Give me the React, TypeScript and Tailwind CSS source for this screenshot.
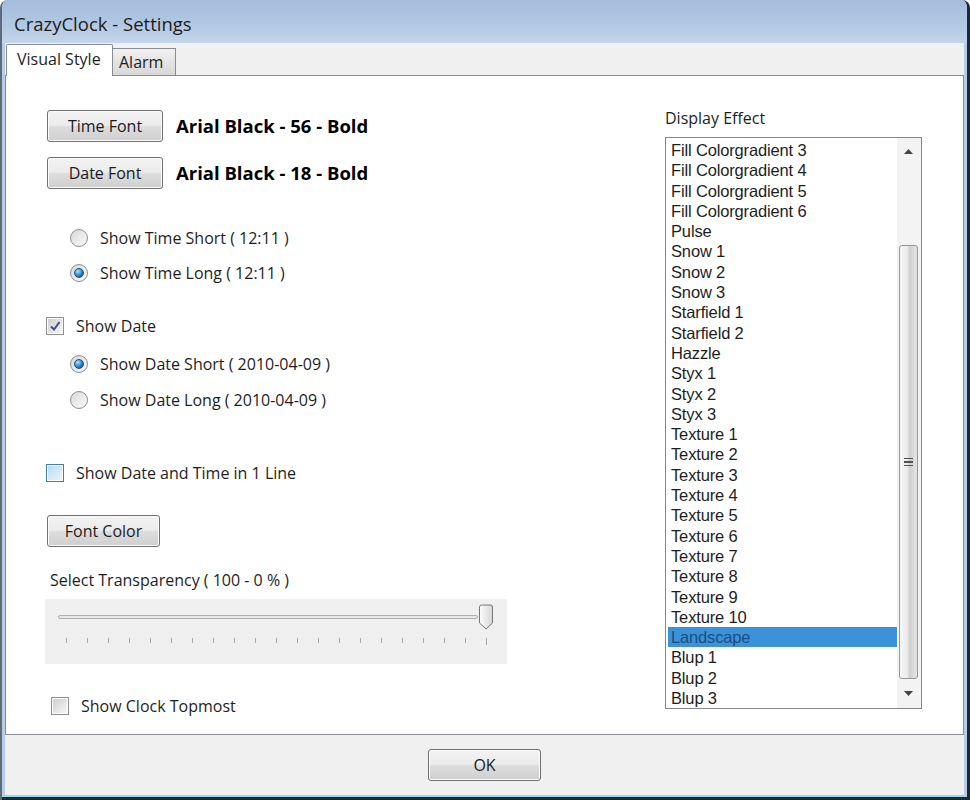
import React from 'react';

const FONT = { fontFamily: '"Open Sans", "Noto Sans", sans-serif' };
const LIST_FONT = { fontFamily: '"Liberation Sans", Arial, sans-serif' };

const EFFECTS = [
  'Fill Colorgradient 3', 'Fill Colorgradient 4', 'Fill Colorgradient 5', 'Fill Colorgradient 6',
  'Pulse', 'Snow 1', 'Snow 2', 'Snow 3', 'Starfield 1', 'Starfield 2', 'Hazzle',
  'Styx 1', 'Styx 2', 'Styx 3', 'Texture 1', 'Texture 2', 'Texture 3', 'Texture 4',
  'Texture 5', 'Texture 6', 'Texture 7', 'Texture 8', 'Texture 9', 'Texture 10',
  'Landscape', 'Blup 1', 'Blup 2', 'Blup 3',
];

function Button({ label, w, h = 32 }: { label: string; w: number; h?: number }) {
  return (
    <button
      className="shrink-0 rounded-[3px] border border-[#707070] bg-[linear-gradient(#f3f3f3,#ebebeb_48%,#dddddd_52%,#cfcfcf)] text-[16px] text-[#1b1b1b] shadow-[inset_0_0_0_1px_#fcfcfc]"
      style={{ width: w, height: h }}
    >
      {label}
    </button>
  );
}

function Radio({ checked }: { checked?: boolean }) {
  return (
    <span className="w-[18px] h-[18px] shrink-0 rounded-full border border-[#8e8f8f] bg-[linear-gradient(135deg,#d8d8d8,#fbfbfb)] flex items-center justify-center">
      {checked && <span className="w-[10px] h-[10px] rounded-full border border-[#1a4f7e] bg-[radial-gradient(circle_at_35%_30%,#b6e2fb,#2f8bd2_50%,#0d4478)]" />}
    </span>
  );
}

function Check({ checked, hover }: { checked?: boolean; hover?: boolean }) {
  return (
    <span className={`w-[18px] h-[18px] shrink-0 border flex items-center justify-center ${hover ? 'border-[#3c7fb1] bg-white' : 'border-[#8e8f8f] bg-white'}`}>
      <span className={`w-[14px] h-[14px] flex items-center justify-center ${hover ? 'bg-[linear-gradient(135deg,#b9dcf6,#eaf5fd)]' : 'bg-[linear-gradient(135deg,#cfcfcf,#f6f6f6)]'}`}>
        {checked && (
          <svg width="12" height="12" viewBox="0 0 12 12">
            <path d="M2 6.5 L5 9.5 L10.5 2" fill="none" stroke="#3b4f8f" strokeWidth="2" />
          </svg>
        )}
      </span>
    </span>
  );
}

function Option({ children, control }: { children: React.ReactNode; control: React.ReactNode }) {
  return (
    <div className="h-[24px] flex items-center gap-[12px] text-[16px] text-[#1e1e1e]">
      {control}
      <span>{children}</span>
    </div>
  );
}

function Slider() {
  const ticks = Array.from({ length: 21 }, (_, i) => i);
  return (
    <div className="ml-[-2px] w-[462px] h-[65px] bg-[#f0f0f0] flex flex-col pt-[5px]">
      <div className="h-[26px] flex items-center pl-[13px]">
        <div className="w-[420px] h-[4px] rounded-full border border-[#b0b0b0] bg-[#e8e8e8]" />
        <svg width="16" height="26" viewBox="0 0 16 26">
          <defs>
            <linearGradient id="th" x1="0" y1="0" x2="1" y2="0">
              <stop offset="0" stopColor="#fdfdfd" />
              <stop offset="1" stopColor="#d6d6d6" />
            </linearGradient>
          </defs>
          <path d="M1.5 3 Q1.5 1 3.5 1 H12.5 Q14.5 1 14.5 3 V19 L8 25 L1.5 19 Z" fill="url(#th)" stroke="#767676" />
        </svg>
      </div>
      <div className="flex pl-[21px] gap-[20px] mt-[8px]">
        {ticks.map(i => (
          <span key={i} className={`w-[1px] ${i === 20 ? 'h-[7px]' : 'h-[5px]'} bg-[#a8a8a8]`} />
        ))}
      </div>
    </div>
  );
}

function ListBox() {
  return (
    <div className="w-[257px] h-[572px] border border-[#828790] bg-white flex">
      <div className="flex-1 pt-[2px] pl-[2px]" style={LIST_FONT}>
        {EFFECTS.map(e => (
          <div
            key={e}
            className={`h-[20.3px] leading-[20.3px] pl-[3px] text-[16.5px] tracking-[-0.15px] whitespace-nowrap ${e === 'Landscape' ? 'bg-[#3a93d8] text-[#1d4d80]' : 'text-[#1e1e1e]'}`}
          >
            {e}
          </div>
        ))}
      </div>
      <div className="w-[24px] bg-[#f3f3f3] flex flex-col items-center pr-[1px]">
        <div className="h-[26px] flex items-center justify-center">
          <svg width="9" height="5" viewBox="0 0 9 5"><path d="M0 5 L4.5 0 L9 5 Z" fill="#444" /></svg>
        </div>
        <div className="mt-[81px] w-[19px] h-[434px] rounded-[3px] border border-[#979797] bg-[linear-gradient(90deg,#f6f6f6,#eaeaea_45%,#cfcfcf_55%,#e4e4e4)] flex flex-col items-center justify-center gap-[2px]">
          <span className="w-[9px] h-[1.5px] bg-[#505050]" />
          <span className="w-[9px] h-[1.5px] bg-[#505050]" />
          <span className="w-[9px] h-[1.5px] bg-[#505050]" />
        </div>
        <div className="flex-1 flex items-center justify-center">
          <svg width="9" height="5" viewBox="0 0 9 5"><path d="M0 0 L9 0 L4.5 5 Z" fill="#444" /></svg>
        </div>
      </div>
    </div>
  );
}

export default function App() {
  return (
    <div className="w-[970px] h-[800px] overflow-hidden bg-[#b8cde6] flex flex-col border-l-2 border-l-[#5d6b7b] border-r-[3px] border-r-[#1e2a33] rounded-t-[8px]" style={FONT}>
      <div className="h-[43px] shrink-0 flex items-center pl-[12px] pt-[5px] bg-[linear-gradient(#a3bcdb,#b3c9e3_60%,#c3d5ea)]">
        <span className="text-[18.5px] text-[#1c1c1c]">CrazyClock - Settings</span>
      </div>

      <div className="flex-1 mx-[3px] bg-[#f0f0f0] flex flex-col">
        <div className="h-[32px] shrink-0 flex items-end pl-[1px]">
          <div className="h-[32px] w-[107px] bg-white border border-b-0 border-[#898c95] rounded-t-[2px] flex items-center pl-[10px] pb-[3px] text-[16px] text-[#1e1e1e] relative z-10 mb-[-1px]">
            Visual Style
          </div>
          <div className="h-[27px] w-[64px] ml-[-1px] border border-b-0 border-[#898c95] bg-[linear-gradient(#f2f2f2,#e3e3e3_50%,#d8d8d8)] flex items-center pl-[6px] text-[16px] text-[#1e1e1e]">
            Alarm
          </div>
        </div>

        <div className="h-[660px] shrink-0 bg-white border border-[#898c95] flex">
          <div className="w-[659px] pl-[41px] pt-[34px] flex flex-col">
            <div className="flex items-center gap-[13px]">
              <Button label="Time Font" w={116} />
              <span className="text-[18.5px] font-bold text-black">Arial Black - 56 - Bold</span>
            </div>
            <div className="flex items-center gap-[13px] mt-[15px]">
              <Button label="Date Font" w={116} />
              <span className="text-[18.5px] font-bold text-black">Arial Black - 18 - Bold</span>
            </div>

            <div className="ml-[23px] mt-[37px] flex flex-col gap-[11px]">
              <Option control={<Radio />}>Show Time Short ( 12:11 )</Option>
              <Option control={<Radio checked />}>Show Time Long ( 12:11 )</Option>
            </div>

            <div className="mt-[29px] ml-[-1px]">
              <Option control={<Check checked />}>Show Date</Option>
            </div>

            <div className="ml-[23px] mt-[14px] flex flex-col gap-[12px]">
              <Option control={<Radio checked />}>Show Date Short ( 2010-04-09 )</Option>
              <Option control={<Radio />}>Show Date Long ( 2010-04-09 )</Option>
            </div>

            <div className="mt-[49px] ml-[-1px]">
              <Option control={<Check hover />}>Show Date and Time in 1 Line</Option>
            </div>

            <div className="mt-[30px]">
              <Button label="Font Color" w={113} />
            </div>

            <div className="mt-[23px] ml-[3px] h-[20px] flex items-center text-[16px] text-[#1e1e1e]">
              Select Transparency ( 100 - 0 % )
            </div>

            <div className="mt-[9px]">
              <Slider />
            </div>

            <div className="mt-[30px] ml-[4px]">
              <Option control={<Check />}>Show Clock Topmost</Option>
            </div>
          </div>

          <div className="flex flex-col pt-[32px]">
            <div className="h-[20px] flex items-center text-[16px] text-[#1e1e1e]">Display Effect</div>
            <div className="mt-[9px]">
              <ListBox />
            </div>
          </div>
        </div>

        <div className="flex-1 flex items-center justify-center">
          <Button label="OK" w={113} h={32} />
        </div>
      </div>
      <div className="h-[2px] mx-[3px] bg-[#8fdcef]" />
      <div className="h-[3px] bg-[#1e2a33]" />
    </div>
  );
}
